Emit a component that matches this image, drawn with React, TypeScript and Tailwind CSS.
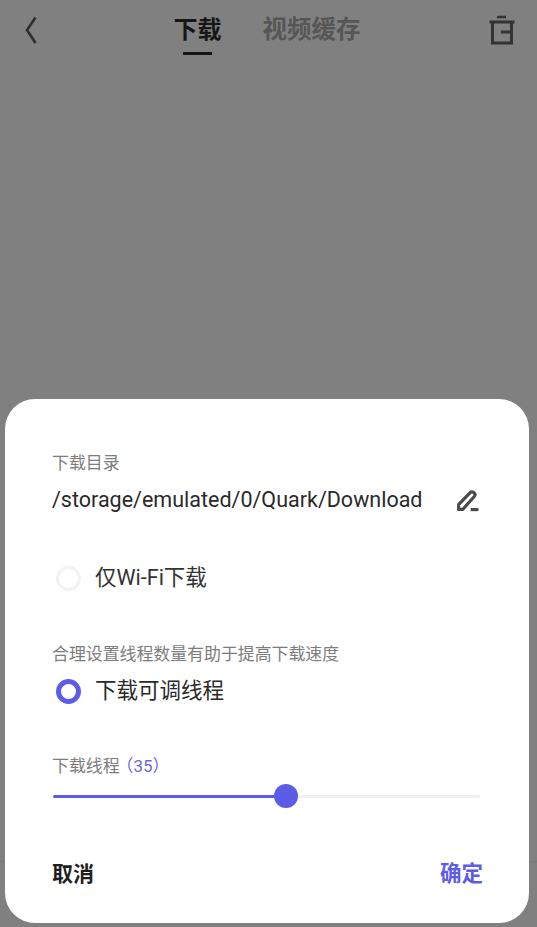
const font = { cn: "font-['Roboto','Noto_Sans_CJK_SC',sans-serif]" };

const App = () => {
  return (
    <div className={`relative flex h-[927px] w-[537px] flex-col overflow-hidden bg-[#808080] ${font.cn}`}>
      {/* divider of the page behind the sheet */}
      <div className="absolute left-0 top-[861px] h-px w-full bg-[#797979]" />

      {/* top bar */}
      <header className="relative flex h-[60px] shrink-0 items-start justify-center">
        <button type="button" className="absolute left-[22px] top-[14px]">
          <svg width="18" height="32" viewBox="0 0 18 32" fill="none" stroke="#2e2e2e" strokeWidth="2.6">
            <path d="M13.5 3.5 L5 16 L13.5 29" />
          </svg>
        </button>

        <div className="ml-[-3px] flex gap-[41px] pt-[14px]">
          <div className="flex flex-col items-center">
            <span className="text-[24px] leading-[32px] font-bold text-[#161616]">下载</span>
            <div className="mt-[6px] h-[3px] w-[29px] bg-[#161616]" />
          </div>
          <span className="text-[24.5px] leading-[32px] font-bold text-[#565656]">视频缓存</span>
        </div>

        <button type="button" className="absolute left-[488px] top-[14px]">
          <svg width="28" height="32" viewBox="0 0 28 32" fill="none" stroke="#333333" strokeWidth="3">
            <path d="M9 3 H18" strokeWidth="2.5" />
            <path d="M1.5 8 H26.5" />
            <path d="M4.5 8 V29 H23.5 V8" />
            <path d="M13 18 H23" />
          </svg>
        </button>
      </header>

      {/* bottom sheet */}
      <section className="relative mx-[5px] mb-[4px] mt-auto flex h-[524px] w-[524px] flex-col rounded-[30px] bg-white pl-[47px] pr-[46px]">
        <p className="mt-[54px] text-[16.9px] leading-[20px] text-[#7d7d7d]">下载目录</p>
        <div className="mt-[9px] flex h-[36px] items-center justify-between">
          <span className="text-[21.5px] leading-[28px] text-[#2a2a2a]">/storage/emulated/0/Quark/Download</span>
          <svg className="mr-[4px]" width="23" height="23" viewBox="0 0 22 22" fill="none" stroke="#4a4a4a" strokeWidth="3">
            <path d="M2.5 19.5 V15 L13.5 3.5 Q15 2 16.8 3.3 L17.5 4 Q19 5.6 17.5 7.2 L6.5 19.5 Z" strokeLinejoin="round" />
            <path d="M14 19.7 H21.5" />
          </svg>
        </div>

        <label className="mt-[45px] flex items-center pl-[4px]">
          <span className="h-[25px] w-[25px] rounded-full border-[3px] border-[#f2f2f2]" />
          <span className="ml-[14px] text-[21.5px] leading-[30px] text-[#333333]">仅Wi-Fi下载</span>
        </label>

        <p className="mt-[50px] text-[16.9px] leading-[22px] text-[#7d7d7d]">合理设置线程数量有助于提高下载速度</p>
        <label className="mt-[11px] flex items-center pl-[4px]">
          <span className="h-[25px] w-[25px] rounded-full border-[5px] border-[#5c5ce6]" />
          <span className="ml-[14px] text-[21.5px] leading-[30px] text-[#2a2a2a]">下载可调线程</span>
        </label>

        <p className="mt-[49px] text-[16.9px] leading-[22px] text-[#7d7d7d]">
          下载线程<span className="ml-[-3px] text-[#6a67d8]">（35）</span>
        </p>
        <div className="relative mt-[7px] flex h-[24px] items-center pl-[1px]">
          <div className="h-[3px] w-[427px] rounded-full bg-[#f0f0f0]">
            <div className="h-[3px] w-[229px] rounded-full bg-[#5c5ce6]" />
          </div>
          <div className="absolute left-[222px] top-0 h-[24px] w-[24px] rounded-full bg-[#5c5ce6]" />
        </div>

        <div className="mt-[52px] flex items-center justify-between">
          <button type="button" className="text-[21px] leading-[28px] font-bold text-[#1f1f1f]">取消</button>
          <button type="button" className="text-[21.5px] leading-[28px] font-bold text-[#5c5ce6]">确定</button>
        </div>
      </section>
    </div>
  );
};

export default App;
